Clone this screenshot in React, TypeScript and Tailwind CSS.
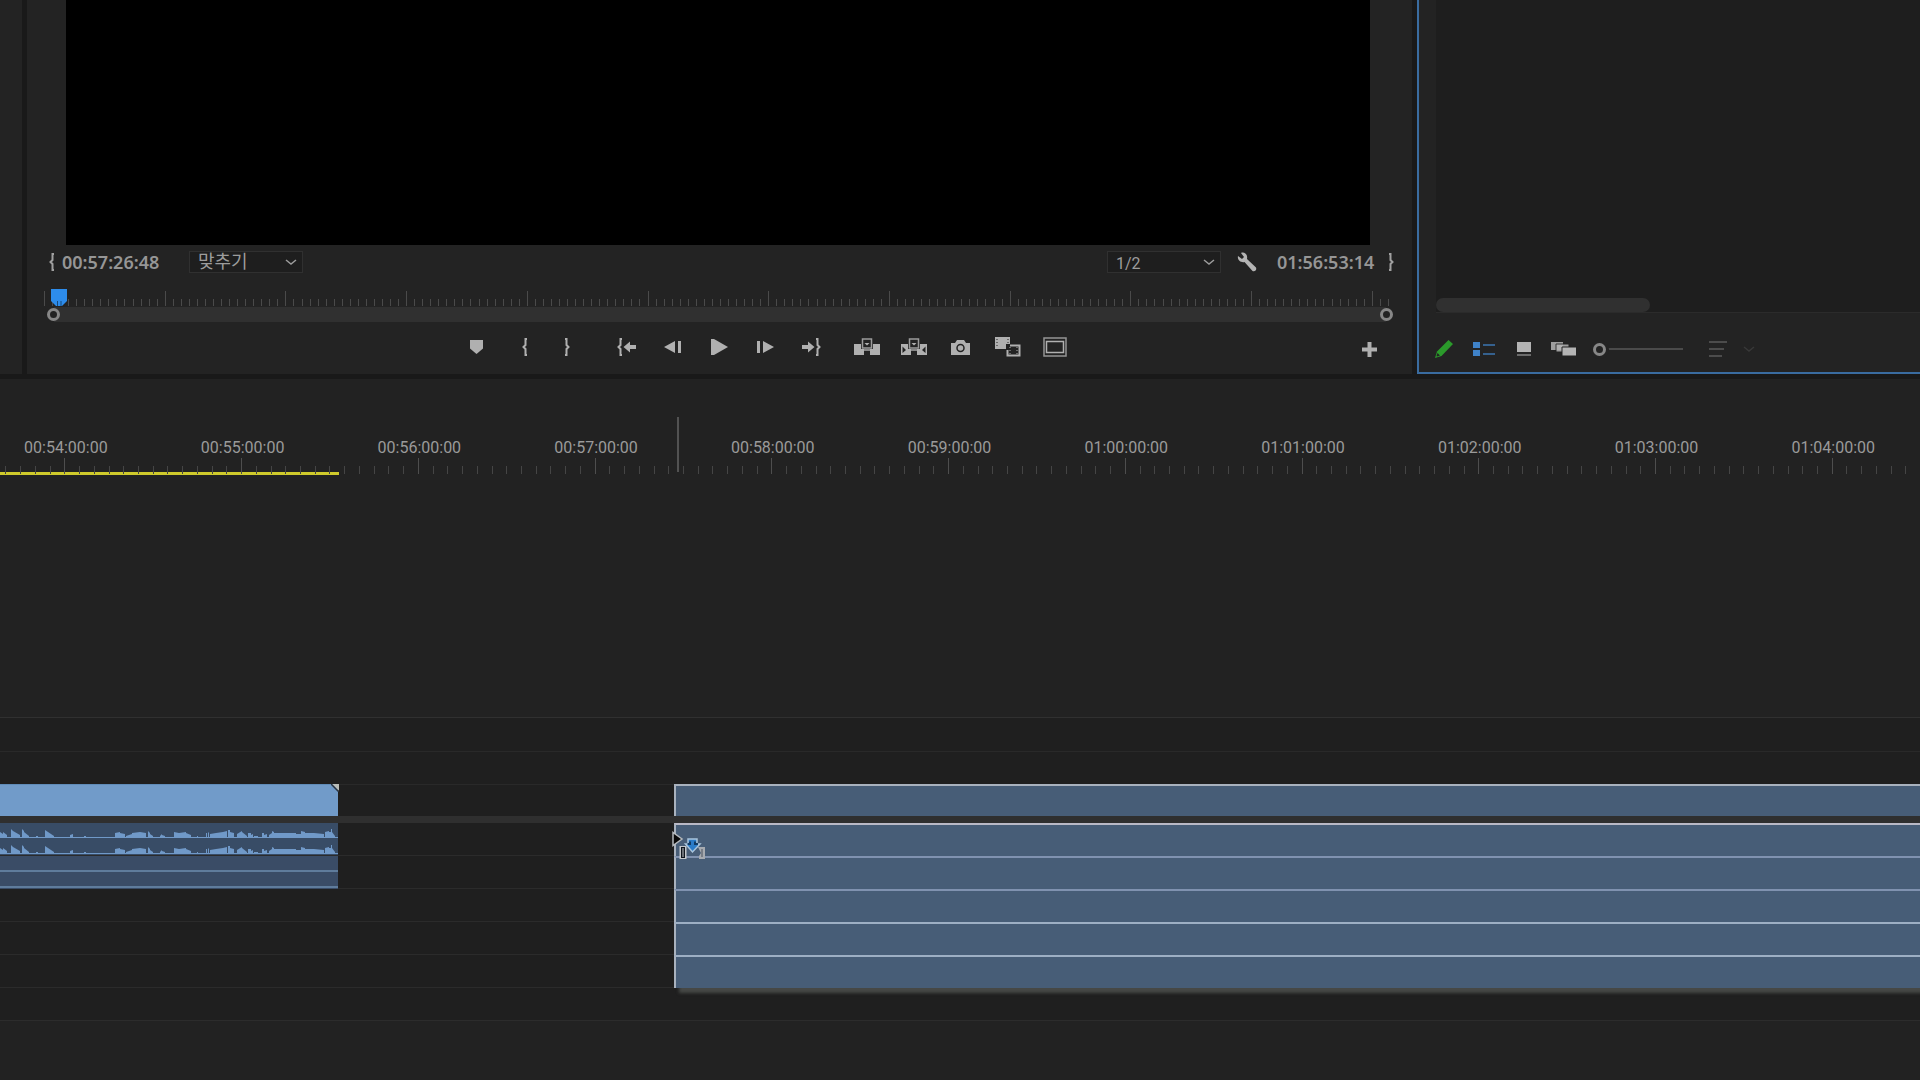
import type { ReactNode } from "react";

const rulerLabels = [
  "00:54:00:00",
  "00:55:00:00",
  "00:56:00:00",
  "00:57:00:00",
  "00:58:00:00",
  "00:59:00:00",
  "01:00:00:00",
  "01:01:00:00",
  "01:02:00:00",
  "01:03:00:00",
  "01:04:00:00",
];

// [start x, end x, height at start, height at end]
const peaks = [
  [0, 3, 5, 3],
  [3, 7, 5, 2],
  [11, 13, 8, 6],
  [13, 20, 6, 2],
  [22, 24, 8, 6],
  [24, 29, 5, 1],
  [36, 38, 1, 1],
  [45, 48, 7, 5],
  [48, 54, 5, 1],
  [70, 73, 2, 3],
  [84, 86, 1, 1],
  [115, 120, 4, 5],
  [120, 125, 4, 3],
  [126, 132, 1, 3],
  [132, 140, 4, 5],
  [140, 146, 5, 4],
  [148, 150, 6, 4],
  [150, 153, 3, 1],
  [160, 162, 1, 3],
  [162, 165, 2, 1],
  [174, 179, 5, 4],
  [179, 186, 4, 5],
  [186, 191, 4, 2],
  [197, 198, 1, 1],
  [206, 207, 4, 4],
  [208, 209, 4, 5],
  [210, 216, 3, 4],
  [216, 223, 4, 5],
  [223, 227, 5, 6],
  [228, 230, 7, 7],
  [230, 234, 5, 4],
  [237, 242, 3, 6],
  [242, 247, 5, 1],
  [248, 251, 4, 4],
  [251, 253, 2, 3],
  [254, 258, 1, 1],
  [262, 264, 4, 4],
  [264, 267, 2, 3],
  [269, 272, 2, 4],
  [272, 274, 6, 5],
  [274, 286, 4, 4],
  [286, 296, 4, 4],
  [296, 301, 3, 3],
  [301, 305, 6, 5],
  [305, 314, 4, 4],
  [314, 324, 4, 3],
  [325, 329, 5, 6],
  [329, 331, 5, 5],
  [331, 332, 8, 8],
  [332, 335, 5, 1],
];

function Waveform() {
  return (
    <svg className="block h-4 w-full" viewBox="0 0 338 16" preserveAspectRatio="none">
      {peaks.map(([x1, x2, h1, h2]) => (
        <polygon
          key={x1}
          points={`${x1},15 ${x1},${14 - h1} ${x2},${14 - h2} ${x2},15`}
          fill="#7099c8"
        />
      ))}
      <rect x="0" y="14" width="338" height="1" fill="#7099c8" />
    </svg>
  );
}

type IconProps = { w: number; h: number; className?: string; children: ReactNode };

function Icon({ w, h, className = "", children }: IconProps) {
  return (
    <svg
      width={w}
      height={h}
      viewBox={`0 0 ${w} ${h}`}
      fill="currentColor"
      className={`shrink-0 ${className}`}
      aria-hidden="true"
    >
      {children}
    </svg>
  );
}

const BraceOpen = () => (
  <Icon w={6} h={18}>
    <path d="M5 1H3.500V7L1.500 9L3.500 11V17H5" fill="none" stroke="currentColor" strokeWidth="2" />
  </Icon>
);

const BraceClose = () => (
  <Icon w={6} h={18}>
    <path d="M1 1H2.500V7L4.500 9L2.500 11V17H1" fill="none" stroke="currentColor" strokeWidth="2" />
  </Icon>
);

const Chevron = () => (
  <Icon w={12} h={7}>
    <path d="M1 1L6 5L11 1" fill="none" stroke="currentColor" strokeWidth="1.5" />
  </Icon>
);

const transport = [
  {
    label: "Add marker",
    width: "w-[52px]",
    icon: (
      <Icon w={13} h={14}>
        <path d="M0 0H13V8.500L6.500 14L0 8.500Z" />
      </Icon>
    ),
  },
  { label: "Mark in", width: "w-[46px]", icon: <BraceOpen /> },
  { label: "Mark out", width: "w-[38px] mr-[18px]", icon: <BraceClose /> },
  {
    label: "Go to in",
    width: "w-[46px]",
    icon: (
      <Icon w={20} h={18}>
        <path d="M5 1H3.500V7L1.500 9L3.500 11V17H5" fill="none" stroke="currentColor" strokeWidth="2" />
        <path d="M6.500 9L13 3.500V7H19V11H13V14.500Z" />
      </Icon>
    ),
  },
  {
    label: "Step back",
    width: "w-[46px]",
    icon: (
      <Icon w={18} h={12}>
        <path d="M0 6L11 0V12ZM14 0H17V12H14Z" />
      </Icon>
    ),
  },
  {
    label: "Play",
    width: "w-[46px]",
    icon: (
      <Icon w={17} h={16}>
        <path d="M0 0H3L17 8L3 16H0Z" />
      </Icon>
    ),
  },
  {
    label: "Step forward",
    width: "w-[46px]",
    icon: (
      <Icon w={18} h={12}>
        <path d="M18 6L7 0V12ZM1 0H4V12H1Z" />
      </Icon>
    ),
  },
  {
    label: "Go to out",
    width: "w-[46px] mr-[9px]",
    icon: (
      <Icon w={20} h={18}>
        <path d="M15 1H16.500V7L18.500 9L16.500 11V17H15" fill="none" stroke="currentColor" strokeWidth="2" />
        <path d="M13.500 9L7 3.500V7H1V11H7V14.500Z" />
      </Icon>
    ),
  },
  {
    label: "Lift",
    width: "w-[47px]",
    icon: (
      <Icon w={26} h={18}>
        <path d="M0 6H7V11H10V17H0ZM26 6H19V11H16V17H26Z" />
        <path d="M8.500 1H17.500V10H8.500Z" fill="none" stroke="currentColor" strokeWidth="1.500" opacity=".85" />
        <path d="M10.500 5H15.500L13 7.500Z" />
        <path d="M10 11H16V13H10Z" opacity=".7" />
      </Icon>
    ),
  },
  {
    label: "Extract",
    width: "w-[47px]",
    icon: (
      <Icon w={26} h={18}>
        <path d="M0 6H7V11H10V17H0ZM26 6H19V11H16V17H26Z" />
        <path d="M1.500 8.500L5 12L1.500 15ZM24.500 8.500L21 12L24.500 15Z" fill="#232323" />
        <path d="M8.500 1H17.500V10H8.500Z" fill="none" stroke="currentColor" strokeWidth="1.500" opacity=".85" />
        <path d="M10.500 5H15.500L13 7.500Z" />
        <path d="M10 11H16V13H10Z" opacity=".7" />
      </Icon>
    ),
  },
  {
    label: "Export frame",
    width: "w-[47px]",
    icon: (
      <Icon w={19} h={16}>
        <path d="M0 4H4L6 1H13L15 4H19V16H0Z" />
        <circle cx="9.500" cy="9" r="3.500" fill="none" stroke="#232323" strokeWidth="1.500" />
      </Icon>
    ),
  },
  {
    label: "Comparison view",
    width: "w-[47px]",
    icon: (
      <Icon w={26} h={20}>
        <path d="M0 0H15V7H11V12H0Z" />
        <path d="M2 2V11M13 2V6" stroke="#232323" strokeWidth="1" strokeDasharray="1 2" />
        <path d="M15 8.500H24.500V18.500H12.500V13" fill="none" stroke="currentColor" strokeWidth="2" />
        <path d="M15 10V18M22 10V18" stroke="currentColor" strokeWidth="1" strokeDasharray="1 2" />
      </Icon>
    ),
  },
  {
    label: "Safe margins",
    width: "w-[47px]",
    icon: (
      <Icon w={24} h={20}>
        <path d="M1 1H23V19H1Z" fill="none" stroke="currentColor" strokeWidth="1.500" opacity=".8" />
        <path d="M3.500 4.500H20.500V15.500H3.500Z" fill="none" stroke="currentColor" strokeWidth="1.500" />
      </Icon>
    ),
  },
];

function Select({ label, value, font }: { label: string; value: string; font: string }) {
  return (
    <div className="relative text-[#9c9c9c]">
      <select
        aria-label={label}
        className={`block h-[22px] w-[114px] appearance-none border border-[#303030] bg-[#1e1e1e] pl-2 ${font}`}
      >
        <option>{value}</option>
      </select>
      <span className="pointer-events-none absolute right-1.5 top-2">
        <Chevron />
      </span>
    </div>
  );
}

function ProgramMonitor() {
  return (
    <section className="flex min-w-0 flex-1 flex-col bg-[#232323]">
      <div className="ml-[39px] mr-[42px] h-[245px] bg-black" />

      <div className="mt-1.5 flex h-[22px] items-center pl-[22px] pr-[18px] text-[#a0a0a0]">
        <BraceOpen />
        <span className="ml-[7px] w-[127px] font-['Noto_Sans',sans-serif] text-[18px] font-semibold leading-[22px] text-[#969696]">
          00:57:26:48
        </span>
        <Select
          label="Zoom"
          value="맞추기"
          font="font-['Liberation_Sans','Noto_Sans_CJK_KR',sans-serif] text-[18px] leading-5"
        />
        <div className="ml-auto flex items-center">
          <Select
            label="Playback resolution"
            value="1/2"
            font="pt-[3px] font-[Roboto,sans-serif] text-base leading-4"
          />
          <button aria-label="Settings" className="ml-4 text-[#b4b4b4]">
            <Icon w={20} h={20}>
              <path d="M4 1C7-.5 11 2 10 7L19 15.500C20 18 18 20 15.500 19L7.500 10C4 11 0 8 1 4L5 7L7 5Z" />
            </Icon>
          </button>
          <span className="ml-5 w-[111px] font-['Noto_Sans',sans-serif] text-[18px] font-semibold leading-[22px] text-[#969696]">
            01:56:53:14
          </span>
          <BraceClose />
        </div>
      </div>

      <div className="relative ml-[17px] mr-[22px] mt-[18px] flex h-[15px] items-end justify-between">
        {Array.from({ length: 168 }, (_, i) => (
          <span key={i} className={i % 15 === 0 ? "h-[15px] w-px bg-[#4a4a4a]" : "h-[7px] w-px bg-[#4a4a4a]"} />
        ))}
        <svg className="absolute -top-0.5 left-[7px]" width="16" height="17" viewBox="0 0 16 17">
          <path d="M0 0H16V12L11 17H5L0 12Z" fill="#2d8ceb" />
          <path d="M6.500 12V17M10 12V17" stroke="#174a7d" />
        </svg>
      </div>

      <div className="ml-5 mr-[19px] mt-px flex h-[15px] items-center">
        <button
          aria-label="Zoom start"
          className="z-10 -mr-1.5 size-[13px] shrink-0 rounded-full border-[3px] border-[#878787] bg-[#232323]"
        />
        <div className="h-[15px] flex-1 bg-[#303030]" />
        <button
          aria-label="Zoom end"
          className="z-10 -ml-1.5 size-[13px] shrink-0 rounded-full border-[3px] border-[#878787] bg-[#232323]"
        />
      </div>

      <div className="mb-3 mt-[10px] flex h-[30px] items-center pl-[423px] pr-[35px] text-[#b0b0b0]">
        {transport.map((item) => (
          <button
            key={item.label}
            aria-label={item.label}
            className={`flex h-[30px] shrink-0 items-center justify-center ${item.width}`}
          >
            {item.icon}
          </button>
        ))}
        <button aria-label="Button editor" className="ml-auto mt-1">
          <Icon w={15} h={15}>
            <path d="M5.500 0H9.500V5.500H15V9.500H9.500V15H5.500V9.500H0V5.500H5.500Z" />
          </Icon>
        </button>
      </div>
    </section>
  );
}

function ProjectBin() {
  return (
    <section className="flex w-[503px] shrink-0 flex-col border-b-2 border-l-2 border-[#3a6ca0] bg-[#232323]">
      <div className="ml-[17px] flex h-[313px] flex-col justify-end border-b border-[#2b2b2b] bg-[#1e1e1e]">
        <div className="h-[14px] w-[214px] rounded-full bg-[#303030]" />
      </div>
      <div className="mt-6 flex h-6 items-center pl-[15px] text-[#b4b4b4]">
        <button aria-label="Writable" className="text-[#2b9a2b]">
          <Icon w={20} h={20}>
            <path d="M14.500 1L19 5L7.500 17L1 19L3 12.500Z" />
            <path d="M3.500 14L6 16.500L3 17.500L2.500 17Z" fill="#232323" />
          </Icon>
        </button>
        <button aria-label="List view" className="ml-[19px] text-[#3f82c8]">
          <Icon w={23} h={15}>
            <path d="M0 0H7V6H0ZM0 8H7V14H0Z" />
            <path d="M10 2H22V4H10ZM10 11H22V13H10Z" opacity=".65" />
          </Icon>
        </button>
        <button aria-label="Icon view" className="ml-[21px]">
          <Icon w={14} h={14}>
            <path d="M0 0H14V10H0Z" />
            <path d="M0 12H14V14H0Z" opacity=".5" />
          </Icon>
        </button>
        <button aria-label="Freeform view" className="ml-5">
          <Icon w={26} h={14}>
            <path d="M0 0H12V8H0Z" opacity=".85" />
            <path d="M5 2H18V10H5Z" stroke="#232323" opacity=".85" />
            <path d="M11 5H25.500V14H11Z" stroke="#232323" />
          </Icon>
        </button>
        <input
          type="range"
          aria-label="Thumbnail size"
          defaultValue={0}
          className="ml-4 h-[13px] w-[90px] appearance-none bg-transparent bg-[linear-gradient(#4a4a4a,#4a4a4a)] bg-[length:100%_2px] bg-center bg-no-repeat [&::-webkit-slider-thumb]:size-[13px] [&::-webkit-slider-thumb]:appearance-none [&::-webkit-slider-thumb]:rounded-full [&::-webkit-slider-thumb]:border-[3px] [&::-webkit-slider-thumb]:border-[#878787] [&::-webkit-slider-thumb]:bg-[#232323] [&::-webkit-slider-thumb]:shadow-[0_0_0_3px_#232323]"
        />
        <button aria-label="Sort icons" className="ml-[26px] flex items-center gap-4 text-[#4c4c4c]">
          <Icon w={18} h={17}>
            <path d="M0 0H18V2H0ZM0 7H15V9H0ZM0 14H13V16H0Z" />
          </Icon>
          <span className="text-[#383838]">
            <Chevron />
          </span>
        </button>
      </div>
    </section>
  );
}

function TimeRuler() {
  return (
    <div className="relative overflow-hidden pt-[60px]">
      <div className="-ml-6 flex">
        {rulerLabels.map((label) => (
          <div key={label} className="min-w-0 flex-1">
            <p className="pl-[3px] text-center font-[Roboto,sans-serif] text-base leading-[18px] text-[#9a9a9a]">{label}</p>
            <div className="mt-px flex h-4 items-end">
              {Array.from({ length: 12 }, (_, i) => (
                <span
                  key={i}
                  className={i === 6 ? "h-4 flex-1 border-l border-[#4e4e4e]" : "h-2 flex-1 border-l border-[#454545]"}
                />
              ))}
            </div>
          </div>
        ))}
      </div>
      <div className="-mt-0.5 h-[3px] w-[339px] bg-[#cfca2c]" />
      <div className="absolute left-[677px] top-[38px] h-[55px] w-[2px] bg-[#525252]" />
    </div>
  );
}

function Track({ border, left, right }: { border: string; left?: ReactNode; right?: ReactNode }) {
  return (
    <div className={`flex h-[33px] ${border}`}>
      <div className="w-[338px] shrink-0">{left}</div>
      <div className="w-[336px] shrink-0" />
      <div className="min-w-0 flex-1">{right}</div>
    </div>
  );
}

const dropFill = "-mb-px h-[33px] border-l-2 border-l-[#a9b2be] bg-[#475d77]";

function DropCursor() {
  return (
    <svg
      className="pointer-events-none absolute left-[671px] top-[114px]"
      width="36"
      height="30"
      viewBox="0 0 36 30"
    >
      <path d="M2 1.500V14.500L11 8Z" fill="#080808" stroke="#b4b8bc" strokeWidth="1.500" />
      <path d="M8.500 15H15.500V28H8.500Z" fill="#c4c8cc" />
      <path d="M10 16H14V27H10Z" fill="#10161e" />
      <path d="M11.500 17H12.500V26H11.500Z" fill="#c4c8cc" />
      <path d="M17 8H26V13H29L21.500 21L14.500 13H17Z" fill="#2b7cc9" stroke="#a9c4dc" strokeWidth="1.500" />
      <path d="M16.500 13H19V10.500M27 13H24V10.500" fill="none" stroke="#123c66" strokeWidth="2" />
      <path d="M27 16H34V28H28V25L30 22Z" fill="#a6aab0" />
      <path d="M30 18H32V26H30Z" fill="#777d86" />
    </svg>
  );
}

function Tracks() {
  return (
    <div className="relative border-b border-[#2c2c2c] bg-[#1f1f1f]">
      <div className="h-[34px] border-t border-[#303030]" />
      <Track border="border-t border-[#292929]" />
      <div className="flex h-8">
        <div className="relative w-[338px] shrink-0 border-t border-[#5f8bb8] bg-[#719bc9]">
          <svg className="absolute -right-px -top-px" width="8" height="8" viewBox="0 0 8 8">
            <path d="M1 0H8V7Z" fill="#b9bdb9" />
            <path d="M0 0L8 8" stroke="#2a3440" strokeWidth="1.500" />
          </svg>
        </div>
        <div className="w-[336px] shrink-0 border-t border-[#292929]" />
        <div className="min-w-0 flex-1 border-l-2 border-t-2 border-[#a9b2be] bg-[#475d77]" />
      </div>
      <div className="h-[7px] bg-[#2f2f2f]" />

      <Track
        border="border-b border-[#2b2b2b]"
        left={
          <div className="h-8 bg-[#384c66]">
            <Waveform />
            <Waveform />
          </div>
        }
        right={<div className={`${dropFill} border-t-2 border-t-[#b9b9c6]`} />}
      />
      <Track
        border="border-b border-[#2b2b2b]"
        left={
          <div className="-mb-px h-[33px] bg-[#3a4c66] pt-[14px]">
            <div className="h-[18px] border-y-2 border-[#5f7c9c]" />
          </div>
        }
        right={<div className={`${dropFill} border-t-2 border-t-[#8092b0]`} />}
      />
      <Track border="border-b border-[#2b2b2b]" right={<div className={`${dropFill} border-t-2 border-t-[#8092b0]`} />} />
      <Track border="border-b border-[#2b2b2b]" right={<div className={`${dropFill} border-t-2 border-t-[#9dafc4]`} />} />
      <Track
        border="border-b border-[#2b2b2b]"
        right={<div className={`${dropFill} border-t-2 border-t-[#9dafc4] shadow-[5px_5px_3px_#464846]`} />}
      />
      <div className="h-8" />
      <DropCursor />
    </div>
  );
}

export default function App() {
  return (
    <main className="flex min-h-screen flex-col overflow-hidden bg-[#222222]">
      <div className="flex border-b-[5px] border-[#191919] bg-[#191919]">
        <div className="mr-[5px] w-[22px] shrink-0 bg-[#232323]" />
        <ProgramMonitor />
        <div className="w-[5px] shrink-0" />
        <ProjectBin />
      </div>
      <section className="flex flex-1 flex-col">
        <TimeRuler />
        <div className="h-[242px]" />
        <Tracks />
      </section>
    </main>
  );
}
